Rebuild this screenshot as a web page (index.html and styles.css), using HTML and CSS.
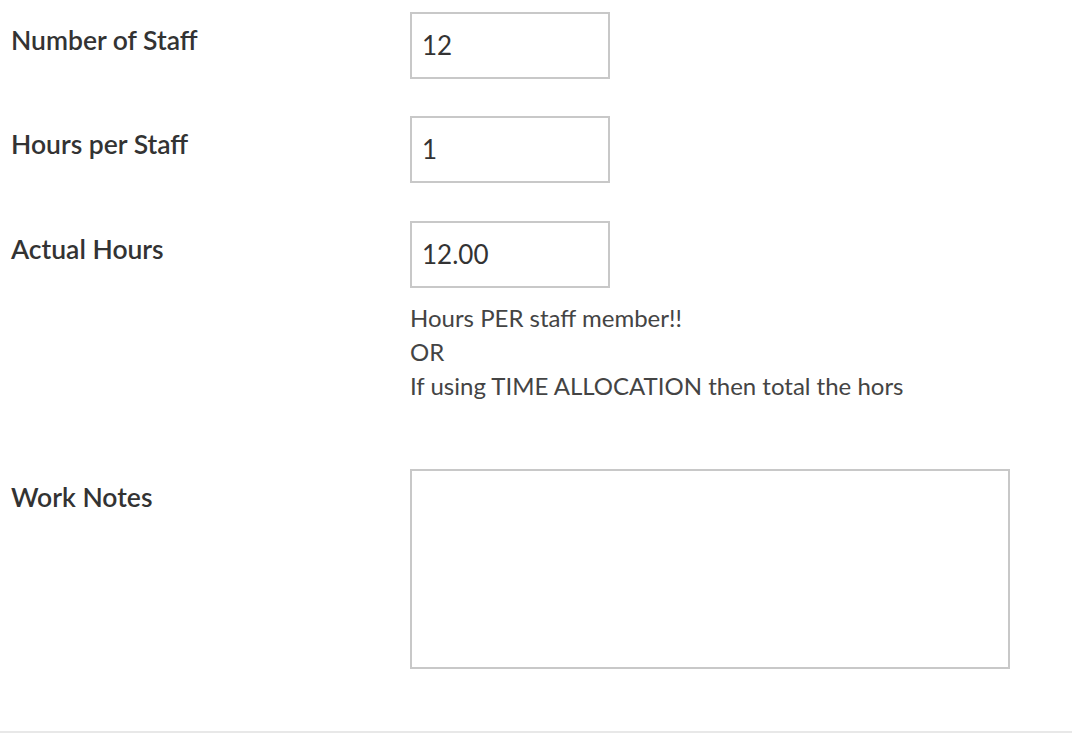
FILE: index.html
```html
<!DOCTYPE html>
<html>
<head>
<meta charset="utf-8">
<link rel="stylesheet" href="styles.css">
</head>
<body>
<form class="form">
  <div class="row r1">
    <label class="label">Number of Staff</label>
    <div class="field"><input class="input" type="text" value="12"></div>
  </div>
  <div class="row r2">
    <label class="label">Hours per Staff</label>
    <div class="field"><input class="input" type="text" value="1"></div>
  </div>
  <div class="row r3">
    <label class="label">Actual Hours</label>
    <div class="field">
      <input class="input" type="text" value="12.00">
      <div class="help">Hours PER staff member!!<br>OR<br>If using TIME ALLOCATION then total the hors</div>
    </div>
  </div>
  <div class="row r4">
    <label class="label">Work Notes</label>
    <div class="field"><textarea class="textarea"></textarea></div>
  </div>
  <div class="divider"></div>
</form>
</body>
</html>
```
FILE: styles.css
```css
html, body { margin: 0; padding: 0; background: #fff; }
body { font-family: Lato, "Noto Sans", sans-serif; color: #333; }
.form { padding: 12px 0 0 0; }
.row { display: flex; align-items: flex-start; }
.label {
  width: 399px;
  padding-left: 11px;
  font-size: 26.5px;
  font-weight: 600;
  color: #333;
  line-height: 30px;
  padding-top: 13px;
}
.r2 { margin-top: 37px; }
.r3 { margin-top: 38px; }
.r4 { margin-top: 66px; }
.input {
  box-sizing: border-box;
  width: 200px;
  height: 67px;
  border: 2px solid #c8c8c8;
  border-radius: 0;
  padding: 0 10px 1px 10px;
  font-family: Lato, sans-serif;
  font-size: 26px;
  color: #333;
  outline: none;
  display: block;
  margin: 0;
}
.help {
  margin-top: 13px;
  font-size: 24px;
  line-height: 34px;
  color: #444;
}
.textarea {
  box-sizing: border-box;
  display: block;
  width: 600px;
  height: 200px;
  border: 2px solid #c8c8c8;
  margin: 0;
  padding: 8px;
  resize: none;
  outline: none;
}
.divider { margin-top: 62px; height: 2px; background: #e8e8e8; }
```
